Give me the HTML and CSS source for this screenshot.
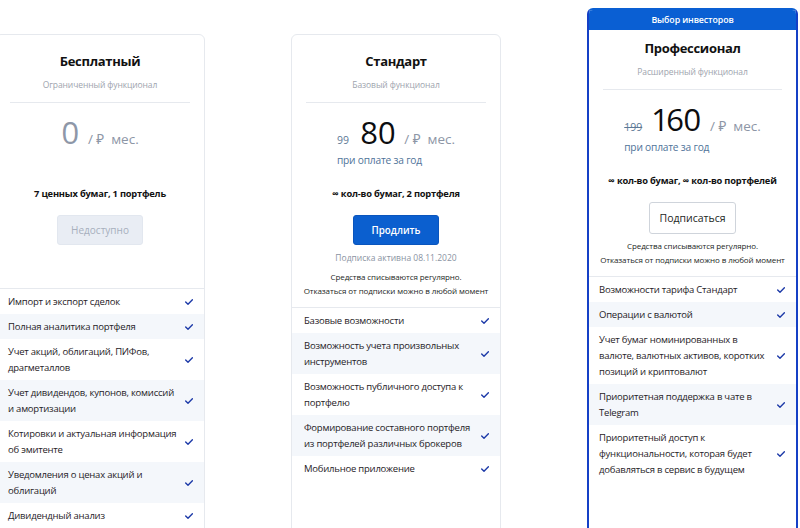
FILE: index.html
```html
<!DOCTYPE html>
<html lang="ru">
<head>
<meta charset="utf-8">
<title>Тарифы</title>
<link rel="stylesheet" href="styles.css">
</head>
<body>
<div class="plans">
  <div class="card card-free">
    <div class="head">
      <div class="title">Бесплатный</div>
      <div class="sub">Ограниченный функционал</div>
      <div class="divider"></div>
      <div class="price-wrap">
        <div class="price">
          <div class="price-row"><span class="num num-muted">0</span><span class="per">/ ₽&nbsp; мес.</span></div>
          <div class="year">&nbsp;</div>
        </div>
      </div>
      <div class="limits">7 ценных бумаг, 1 портфель</div>
      <button class="btn btn-disabled">Недоступно</button>
    </div>
    <ul class="features">
      <li><span>Импорт и экспорт сделок</span><svg class="check" viewBox="0 0 8 6"><polyline points="0.7,3 3,5.2 7.4,0.8"/></svg></li>
      <li><span>Полная аналитика портфеля</span><svg class="check" viewBox="0 0 8 6"><polyline points="0.7,3 3,5.2 7.4,0.8"/></svg></li>
      <li><span>Учет акций, облигаций, ПИФов, драгметаллов</span><svg class="check" viewBox="0 0 8 6"><polyline points="0.7,3 3,5.2 7.4,0.8"/></svg></li>
      <li><span>Учет дивидендов, купонов, комиссий и амортизации</span><svg class="check" viewBox="0 0 8 6"><polyline points="0.7,3 3,5.2 7.4,0.8"/></svg></li>
      <li><span>Котировки и актуальная информация об эмитенте</span><svg class="check" viewBox="0 0 8 6"><polyline points="0.7,3 3,5.2 7.4,0.8"/></svg></li>
      <li><span>Уведомления о ценах акций и облигаций</span><svg class="check" viewBox="0 0 8 6"><polyline points="0.7,3 3,5.2 7.4,0.8"/></svg></li>
      <li><span>Дивидендный анализ</span><svg class="check" viewBox="0 0 8 6"><polyline points="0.7,3 3,5.2 7.4,0.8"/></svg></li>
    </ul>
  </div>

  <div class="card card-std">
    <div class="head">
      <div class="title">Стандарт</div>
      <div class="sub">Базовый функционал</div>
      <div class="divider"></div>
      <div class="price-wrap">
        <div class="price">
          <div class="price-row"><span class="old">99</span><span class="num">80</span><span class="per">/ ₽&nbsp; мес.</span></div>
          <div class="year">при оплате за год</div>
        </div>
      </div>
      <div class="limits">∞ кол-во бумаг, 2 портфеля</div>
      <button class="btn btn-primary">Продлить</button>
      <div class="active">Подписка активна 08.11.2020</div>
      <div class="note">Средства списываются регулярно.<br>Отказаться от подписки можно в любой момент</div>
    </div>
    <ul class="features">
      <li><span>Базовые возможности</span><svg class="check" viewBox="0 0 8 6"><polyline points="0.7,3 3,5.2 7.4,0.8"/></svg></li>
      <li><span>Возможность учета произвольных инструментов</span><svg class="check" viewBox="0 0 8 6"><polyline points="0.7,3 3,5.2 7.4,0.8"/></svg></li>
      <li><span>Возможность публичного доступа к портфелю</span><svg class="check" viewBox="0 0 8 6"><polyline points="0.7,3 3,5.2 7.4,0.8"/></svg></li>
      <li><span>Формирование составного портфеля из портфелей различных брокеров</span><svg class="check" viewBox="0 0 8 6"><polyline points="0.7,3 3,5.2 7.4,0.8"/></svg></li>
      <li><span>Мобильное приложение</span><svg class="check" viewBox="0 0 8 6"><polyline points="0.7,3 3,5.2 7.4,0.8"/></svg></li>
    </ul>
  </div>

  <div class="card card-pro">
    <div class="badge">Выбор инвесторов</div>
    <div class="head">
      <div class="title">Профессионал</div>
      <div class="sub">Расширенный функционал</div>
      <div class="divider"></div>
      <div class="price-wrap">
        <div class="price">
          <div class="price-row"><span class="old old-struck">199</span><span class="num">160</span><span class="per">/ ₽&nbsp; мес.</span></div>
          <div class="year">при оплате за год</div>
        </div>
      </div>
      <div class="limits">∞ кол-во бумаг, ∞ кол-во портфелей</div>
      <button class="btn btn-outline">Подписаться</button>
      <div class="note note-pro">Средства списываются регулярно.<br>Отказаться от подписки можно в любой момент</div>
    </div>
    <ul class="features">
      <li><span>Возможности тарифа Стандарт</span><svg class="check" viewBox="0 0 8 6"><polyline points="0.7,3 3,5.2 7.4,0.8"/></svg></li>
      <li><span>Операции с валютой</span><svg class="check" viewBox="0 0 8 6"><polyline points="0.7,3 3,5.2 7.4,0.8"/></svg></li>
      <li><span>Учет бумаг номинированных в валюте, валютных активов, коротких позиций и криптовалют</span><svg class="check" viewBox="0 0 8 6"><polyline points="0.7,3 3,5.2 7.4,0.8"/></svg></li>
      <li><span>Приоритетная поддержка в чате в Telegram</span><svg class="check" viewBox="0 0 8 6"><polyline points="0.7,3 3,5.2 7.4,0.8"/></svg></li>
      <li><span>Приоритетный доступ к функциональности, которая будет добавляться в сервис в будущем</span><svg class="check" viewBox="0 0 8 6"><polyline points="0.7,3 3,5.2 7.4,0.8"/></svg></li>
    </ul>
  </div>
</div>
</body>
</html>
```

FILE: styles.css
```css
* { box-sizing: border-box; }

html, body {
  margin: 0;
  padding: 0;
  background: #ffffff;
  overflow: hidden;
}

body {
  font-family: "Open Sans", "Noto Sans", "DejaVu Sans", sans-serif;
  color: #1d1f24;
  width: 800px;
  height: 528px;
}

.plans {
  display: flex;
  align-items: flex-start;
  gap: 86px;
  margin-left: -5px;
  padding-top: 8px;
}

.card {
  width: 210px;
  flex: 0 0 210px;
  min-height: 560px;
  border: 1px solid #e6e9ee;
  border-radius: 6px;
  background: #fff;
  margin-top: 26px;
}

.card-pro {
  margin-top: 0;
  width: 211px;
  flex-basis: 211px;
  border: 2px solid #1540c6;
  border-top-color: #0a5fd3;
  border-radius: 6px;
  overflow: hidden;
}

.badge {
  height: 20px;
  line-height: 20px;
  background: #0a5fd3;
  color: #fff;
  font-size: 8.8px;
  letter-spacing: -0.1px;
  font-weight: 600;
  text-align: center;
}

.head {
  text-align: center;
  padding: 16px 0 9px;
}

.card-free .head { padding-bottom: 43px; }
.card-pro .head { padding-top: 8px; }

.title {
  font-size: 13px;
  letter-spacing: -0.3px;
  font-weight: 700;
  line-height: 20px;
  color: #111;
}

.sub {
  margin-top: 7px;
  font-size: 8.5px;
  letter-spacing: -0.1px;
  line-height: 14px;
  color: #9ea4ae;
}

.divider {
  height: 1px;
  background: #e6e9ee;
  margin: 10px 14px 9px;
}

.price-wrap {
  display: flex;
  justify-content: center;
}

.price {
  display: flex;
  flex-direction: column;
  align-items: flex-start;
}

.price-row {
  display: flex;
  align-items: baseline;
  height: 40px;
  line-height: 40px;
}

.old {
  font-size: 10.5px;
  color: #5c7895;
  margin-right: 11px;
}

.old-struck { text-decoration: line-through; }

.num {
  font-size: 31px;
  color: #0c0d10;
  margin-right: 9px;
  font-variant-numeric: proportional-nums;
  letter-spacing: -0.5px;
}

.num-muted { color: #8e97a8; }

.per {
  font-size: 13.5px;
  color: #8d96a6;
}

.year {
  font-size: 10.2px;
  letter-spacing: -0.2px;
  line-height: 16px;
  color: #4f7399;
}

.limits {
  margin-top: 18px;
  font-size: 9.3px;
  letter-spacing: -0.2px;
  font-weight: 700;
  line-height: 16px;
  color: #111;
}

.btn {
  display: block;
  margin: 13px auto 0;
  width: 86px;
  height: 30px;
  border-radius: 3px;
  font-family: inherit;
  font-size: 10px;
  padding: 0;
  cursor: pointer;
}

.btn-disabled {
  background: #e9edf4;
  border: 1px solid #e2e7ef;
  color: #a7afbd;
}

.btn-primary {
  background: #0b5fcf;
  border: 1px solid #0a55bd;
  color: #fff;
  font-size: 9.8px;
  font-weight: 600;
}

.btn-outline {
  width: 87px;
  height: 32px;
  background: #fff;
  border: 1px solid #cfd4db;
  color: #1d1f24;
  font-size: 10.5px;
}

.active {
  margin-top: 6px;
  font-size: 8.5px;
  line-height: 14px;
  color: #8a93a2;
}

.note {
  margin-top: 5px;
  font-size: 8px;
  letter-spacing: -0.1px;
  line-height: 14px;
  color: #1d1f24;
}

.note-pro { margin-top: 5px; }

.features {
  list-style: none;
  margin: 0;
  padding: 0;
  border-top: 1px solid #e6e9ee;
}

.features li {
  display: flex;
  align-items: center;
  justify-content: space-between;
  gap: 6px;
  padding: 4.5px 11px 4.5px 12px;
  font-size: 9.5px;
  letter-spacing: -0.22px;
  line-height: 16px;
  color: #1f2227;
}

.card-pro .features li { padding-left: 10px; }

.features li:nth-child(even) {
  background: #f4f7fb;
}

.check {
  flex: 0 0 8px;
  width: 8px;
  height: 6px;
  fill: none;
  stroke: #1d3aa8;
  stroke-width: 1.4;
  stroke-linecap: round;
  stroke-linejoin: round;
}
```
